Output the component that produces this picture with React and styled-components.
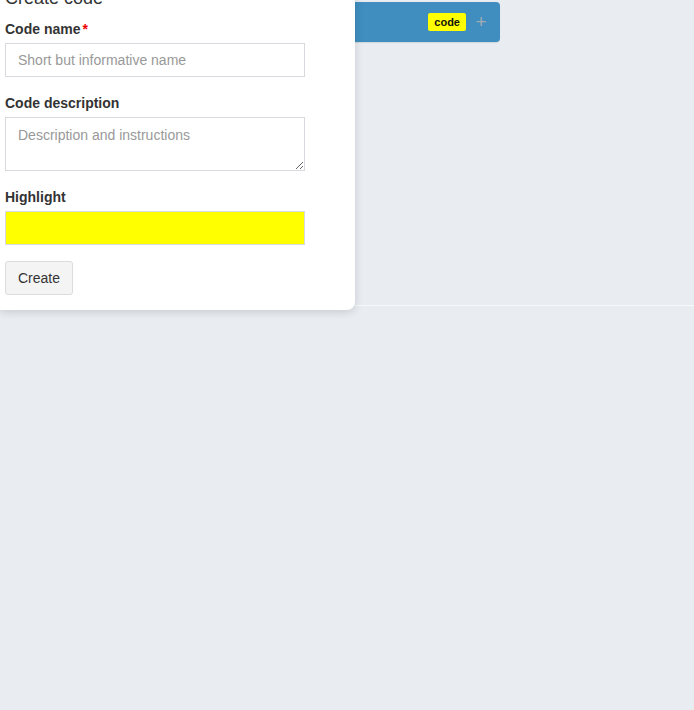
import React from 'react'
import styled, { createGlobalStyle } from 'styled-components'

const GlobalStyle = createGlobalStyle`
  html, body {
    margin: 0;
    padding: 0;
    background: #e9edf2;
    font-family: "Liberation Sans", Arial, sans-serif;
  }
`

function App() {
  return (
    <>
      <GlobalStyle />
      <Page>
        <Stage>
          <Toolbar>
            <CodeBadge color="#ffff00">code</CodeBadge>
            <AddButton>+</AddButton>
          </Toolbar>
          <Popover>
            <Title>Create code</Title>
            <Field>
              <Label>Code name<Required>*</Required></Label>
              <Input placeholder="Short but informative name" />
            </Field>
            <Field>
              <Label>Code description</Label>
              <TextArea placeholder="Description and instructions" />
            </Field>
            <Field>
              <Label>Highlight</Label>
              <Input readOnly bg="#ffff00" />
            </Field>
            <Button>Create</Button>
          </Popover>
        </Stage>
        <Lower />
      </Page>
    </>
  )
}

export default App

const Page = styled.div`
  min-height: 710px;
  display: flex;
  flex-direction: column;
`

const Stage = styled.div`
  position: relative;
  height: 306px;
  border-bottom: 1px solid #f6f8fa;
  display: flex;
  align-items: flex-start;
  padding: 2px 0 0 150px;
  box-sizing: border-box;
`

const Lower = styled.div`
  flex: 1;
`

const Toolbar = styled.div`
  width: 350px;
  height: 40px;
  background: #3f8ebf;
  border-radius: 0 4px 4px 0;
  box-shadow: 0 1px 1px rgba(0,0,0,0.1);
  display: flex;
  align-items: center;
  justify-content: flex-end;
  padding-right: 12px;
  box-sizing: border-box;
  gap: 8px;
`

const CodeBadge = styled.span`
  background: ${p => p.color};
  color: #111;
  font-size: 11px;
  font-weight: bold;
  height: 18px;
  line-height: 18px;
  padding: 0 6px;
  border-radius: 2px;
`

const AddButton = styled.span`
  color: #a0aab4;
  font-size: 19px;
  line-height: 18px;
  width: 14px;
  text-align: center;
`

const Popover = styled.div`
  position: absolute;
  left: 0;
  top: -23px;
  width: 355px;
  box-sizing: border-box;
  padding: 10px 5px 15px 5px;
  background: #fff;
  border-radius: 0 0 8px 0;
  box-shadow: 0 2px 8px rgba(0,0,0,0.15);
  color: #333;
`

const Title = styled.div`
  font-size: 18px;
  line-height: 22px;
  margin-bottom: 10px;
  color: #333;
`

const Field = styled.div`
  margin-bottom: 16px;
`

const Label = styled.div`
  font-size: 14px;
  font-weight: bold;
  line-height: 20px;
  margin-bottom: 4px;
  color: #333;
`

const Required = styled.span`
  color: #e00;
  margin-left: 2px;
`

const Input = styled.input`
  display: block;
  width: 300px;
  height: 34px;
  box-sizing: border-box;
  border: 1px solid #d6d9dd;
  background: ${p => p.bg || '#fff'};
  padding: 0 12px;
  font-family: "Liberation Sans", Arial, sans-serif;
  font-size: 14px;
  color: #333;
  outline: none;
  &::placeholder { color: #999; }
`

const TextArea = styled.textarea`
  display: block;
  width: 300px;
  height: 54px;
  box-sizing: border-box;
  border: 1px solid #d6d9dd;
  padding: 9px 12px;
  font-family: "Liberation Sans", Arial, sans-serif;
  font-size: 14px;
  color: #333;
  outline: none;
  margin: 0;
  &::placeholder { color: #999; }
`

const Button = styled.button`
  height: 34px;
  padding: 0 12px;
  background: #f4f4f4;
  border: 1px solid #dcdcdc;
  border-radius: 3px;
  font-family: "Liberation Sans", Arial, sans-serif;
  font-size: 14px;
  color: #333;
`
